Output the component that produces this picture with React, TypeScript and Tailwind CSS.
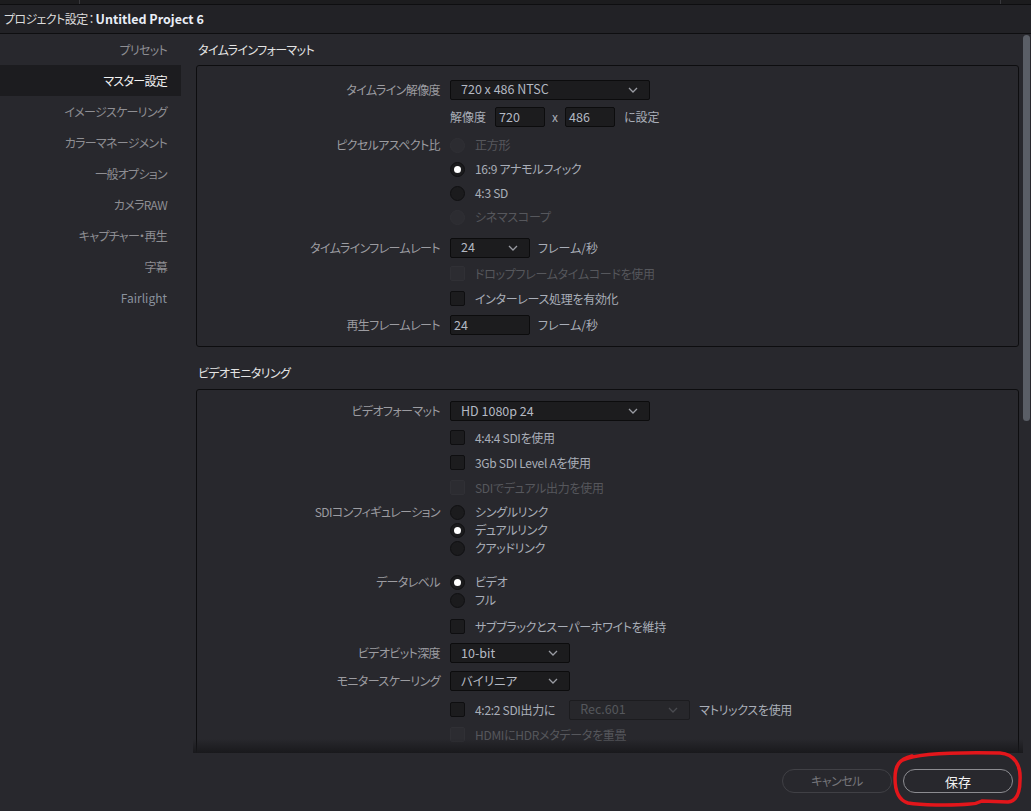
import type { ReactNode } from "react";

const sideItems = [
  "プリセット",
  "マスター設定",
  "イメージスケーリング",
  "カラーマネージメント",
  "一般オプション",
  "カメラRAW",
  "キャプチャー・再生",
  "字幕",
  "Fairlight",
];

function Chevron({ color = "#9a9ca3" }: { color?: string }) {
  return (
    <svg width="10" height="6" viewBox="0 0 10 6" className="shrink-0">
      <path d="M1 1l4 4 4-4" fill="none" stroke={color} strokeWidth="1.3" />
    </svg>
  );
}

function Dropdown({ value, w, disabled }: { value: string; w: string; disabled?: boolean }) {
  return (
    <div
      className={`${w} h-[20px] flex items-center justify-between pl-[10px] pr-[11px] rounded-[2px] border text-[12.5px] ${
        disabled ? "border-[#1c1c1f] bg-[#27272b] text-[#55575c]" : "border-[#0c0c0d] bg-[#1c1c1e] text-[#b4b9c3]"
      }`}
    >
      <span>{value}</span>
      <Chevron color={disabled ? "#4a4b50" : "#9a9ca3"} />
    </div>
  );
}

function Input({ value, w }: { value: string; w: string }) {
  return (
    <div className={`${w} h-[20px] flex items-center pl-[3px] rounded-[2px] border border-[#0c0c0d] bg-[#1c1c1e] text-[12.5px] text-[#b4b9c3]`}>
      {value}
    </div>
  );
}

function Radio({ checked, disabled, children }: { checked?: boolean; disabled?: boolean; children: ReactNode }) {
  return (
    <div className="flex items-center gap-[10px]">
      <span
        className={`w-[15px] h-[15px] rounded-full border flex items-center justify-center ${
          disabled ? "bg-[#2c2c31] border-[#303035]" : "bg-[#1b1b1d] border-[#101012]"
        }`}
      >
        {checked && <span className="w-[7px] h-[7px] rounded-full bg-white" />}
      </span>
      <span className={`tracking-[-0.3px] ${disabled ? "text-[#56575c]" : "text-[#a9aeb8]"}`}>{children}</span>
    </div>
  );
}

function Check({ disabled, children }: { disabled?: boolean; children: ReactNode }) {
  return (
    <div className="flex items-center gap-[10px]">
      <span
        className={`w-[15px] h-[15px] rounded-[2px] border ${
          disabled ? "bg-[#2c2c31] border-[#303035]" : "bg-[#1c1c1e] border-[#0e0e10]"
        }`}
      />
      <span className={`tracking-[-0.3px] ${disabled ? "text-[#56575c]" : "text-[#a9aeb8]"}`}>{children}</span>
    </div>
  );
}

function Row({ label, className, children }: { label?: string; className: string; children: ReactNode }) {
  return (
    <div className={`flex items-center ${className}`}>
      <div className="w-[243px] text-right text-[#9c9ca1] tracking-[-0.6px]">{label}</div>
      <div className="ml-[10px] flex items-center">{children}</div>
    </div>
  );
}

export default function App() {
  return (
    <div className="relative w-[1031px] h-[811px] overflow-hidden flex flex-col bg-[#28282d] text-[12px] leading-none font-['Noto_Sans_CJK_JP','Noto_Sans',sans-serif] [font-feature-settings:'palt']">
      {/* strip above the dialog */}
      <div className="h-[4px] bg-[#1c1c1e] flex">
        <div className="w-[80px] border-r border-[#38383c]" />
        <div className="w-[921px] border-r border-[#38383c]" />
      </div>
      <div className="h-[30px] flex items-center pl-[4px] bg-[#222226] border-y border-[#0e0e10] text-[12px]">
        <span className="text-[#dcdcdc] tracking-[-0.6px]">プロジェクト設定</span>
        <span className="text-[#dcdcdc] mx-[1px]">：</span>
        <span className="font-bold text-[#e9eef7] text-[12.5px]">Untitled Project 6</span>
      </div>

      <div className="flex-1 min-h-0 flex">
        <div className="w-[181px] flex flex-col">
          {sideItems.map((s) => (
            <div
              key={s}
              className={`h-[31px] flex items-center justify-end pr-[14px] tracking-[-0.7px] ${
                s === "マスター設定" ? "bg-[#1c1c1f] text-[#f2f2f2]" : s === "Fairlight" ? "text-[#8a929e] tracking-normal" : "text-[#8e8e93]"
              }`}
            >
              {s}
            </div>
          ))}
        </div>

        <div className="relative w-[842px] overflow-hidden">
          <div className="h-[31px] flex items-center pl-[17px] text-[#e4e4e4] tracking-[-0.6px]">タイムラインフォーマット</div>
          <div className="ml-[15px] w-[823px] rounded-[3px] border border-[#0d0d0f] pt-[13px] pb-[11px]">
            <Row label="タイムライン解像度" className="h-[21px]">
              <Dropdown value="720 x 486 NTSC" w="w-[200px]" />
            </Row>
            <Row className="h-[20px] mt-[7px]">
              <span className="text-[#a9aeb8]">解像度</span>
              <span className="ml-[9px]"><Input value="720" w="w-[50px]" /></span>
              <span className="mx-[7px] text-[#a9aeb8]">x</span>
              <Input value="486" w="w-[50px]" />
              <span className="ml-[9px] text-[#a9aeb8]">に設定</span>
            </Row>
            <Row label="ピクセルアスペクト比" className="h-[24px] mt-[6px]">
              <Radio disabled>正方形</Radio>
            </Row>
            <Row className="h-[24px]">
              <Radio checked>16:9 アナモルフィック</Radio>
            </Row>
            <Row className="h-[24px]">
              <Radio>4:3 SD</Radio>
            </Row>
            <Row className="h-[24px]">
              <Radio disabled>シネマスコープ</Radio>
            </Row>
            <Row label="タイムラインフレームレート" className="h-[21px] mt-[8px]">
              <Dropdown value="24" w="w-[80px]" />
              <span className="ml-[8px] text-[#a9aeb8]">フレーム/秒</span>
            </Row>
            <Row className="h-[25px] mt-[3px]">
              <Check disabled>ドロップフレームタイムコードを使用</Check>
            </Row>
            <Row className="h-[25px]">
              <Check>インターレース処理を有効化</Check>
            </Row>
            <Row label="再生フレームレート" className="h-[20px] mt-[4px]">
              <Input value="24" w="w-[80px]" />
              <span className="ml-[8px] text-[#a9aeb8]">フレーム/秒</span>
            </Row>
          </div>

          <div className="mt-[12px] mb-[3px] h-[27px] flex items-center pl-[17px] text-[#e4e4e4] tracking-[-0.6px]">ビデオモニタリング</div>
          <div className="ml-[15px] w-[823px] rounded-[3px] border border-[#0d0d0f] pt-[11px] pb-[60px]">
            <Row label="ビデオフォーマット" className="h-[20px]">
              <Dropdown value="HD 1080p 24" w="w-[200px]" />
            </Row>
            <Row className="h-[25px] mt-[4px]">
              <Check>4:4:4 SDIを使用</Check>
            </Row>
            <Row className="h-[25px]">
              <Check>3Gb SDI Level Aを使用</Check>
            </Row>
            <Row className="h-[25px]">
              <Check disabled>SDIでデュアル出力を使用</Check>
            </Row>
            <Row label="SDIコンフィギュレーション" className="h-[18px] mt-[3px]">
              <Radio>シングルリンク</Radio>
            </Row>
            <Row className="h-[18px]">
              <Radio checked>デュアルリンク</Radio>
            </Row>
            <Row className="h-[18px]">
              <Radio>クアッドリンク</Radio>
            </Row>
            <Row label="データレベル" className="h-[18px] mt-[16px]">
              <Radio checked>ビデオ</Radio>
            </Row>
            <Row className="h-[18px]">
              <Radio>フル</Radio>
            </Row>
            <Row className="h-[25px] mt-[5px]">
              <Check>サブブラックとスーパーホワイトを維持</Check>
            </Row>
            <Row label="ビデオビット深度" className="h-[20px] mt-[4px]">
              <Dropdown value="10-bit" w="w-[120px]" />
            </Row>
            <Row label="モニタースケーリング" className="h-[20px] mt-[8px]">
              <Dropdown value="バイリニア" w="w-[120px]" />
            </Row>
            <Row className="h-[25px] mt-[6px]">
              <Check>4:2:2 SDI出力に</Check>
              <span className="ml-[14px]"><Dropdown value="Rec.601" w="w-[121px]" disabled /></span>
              <span className="ml-[9px] text-[#a9aeb8] tracking-[-0.3px]">マトリックスを使用</span>
            </Row>
            <Row className="h-[25px]">
              <Check disabled>HDMIにHDRメタデータを重畳</Check>
            </Row>
          </div>
          {/* fade where the list runs under the footer */}
          <div className="absolute left-[12px] right-0 bottom-0 h-[14px] bg-gradient-to-b from-transparent to-[#19191c]" />
        </div>

        <div className="w-[8px] pt-[1px]">
          <div className="w-[7px] h-[386px] rounded-full bg-[#5a5e66]" />
        </div>
      </div>

      <div className="h-[58px] flex items-start justify-end gap-[11px] pt-[16px] pr-[18px]">
        <button className="w-[110px] h-[24px] rounded-full border border-[#404045] text-[#76767b] tracking-[-0.5px]">キャンセル</button>
        <button className="w-[110px] h-[24px] rounded-full border border-[#8c8c91] text-[#f2f2f2] text-[13px]">保存</button>
      </div>

      {/* red marker annotation */}
      <svg className="absolute left-[890px] top-[748px] pointer-events-none" width="135" height="63" viewBox="0 0 135 63">
        <path
          d="M13 12 C25 6 60 4 110 5 C125 6 131 18 130 32 C130 45 127 53 118 54 L92 53 C88 55 86 56 80 56 C60 58 30 57 18 55 C8 52 5 42 5 30 C5 18 9 11 22 8"
          fill="none"
          stroke="#e3161b"
          strokeWidth="3.5"
          strokeLinecap="round"
        />
      </svg>
    </div>
  );
}
